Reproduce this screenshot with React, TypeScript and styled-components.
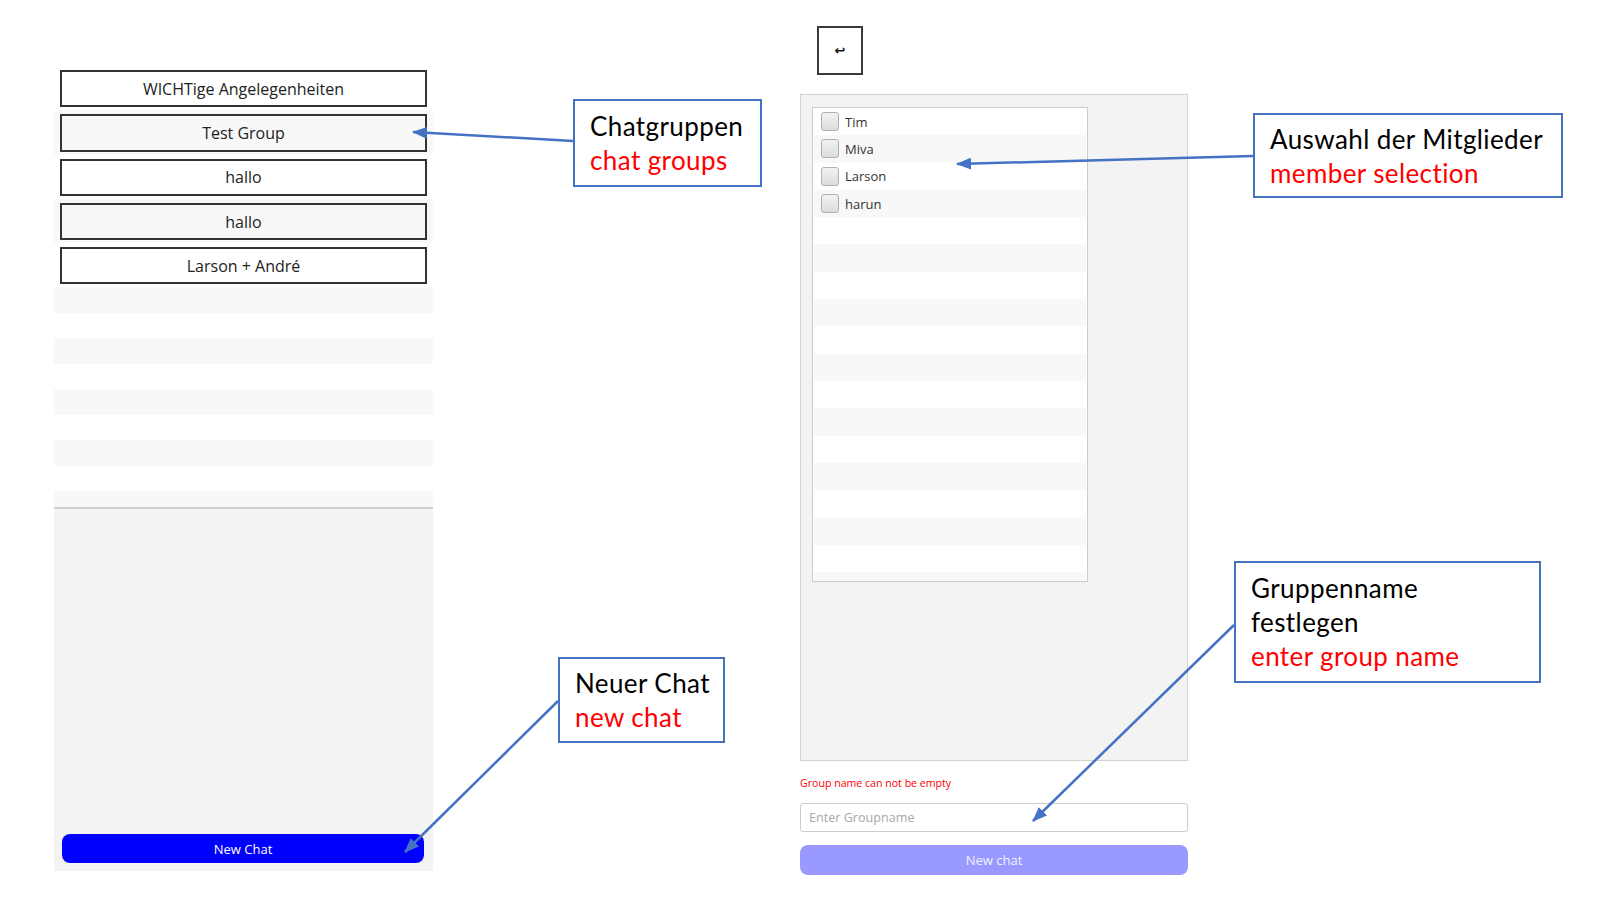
import React from "react";
import styled, { createGlobalStyle } from "styled-components";

const GlobalStyle = createGlobalStyle`
  html, body { margin: 0; padding: 0; background: #ffffff; }
  * { box-sizing: border-box; }
`;

const UI_FONT = `"Open Sans", "Noto Sans", sans-serif`;
const NOTE_FONT = `Lato, "Open Sans", sans-serif`;

const Page = styled.div`
  position: relative;
  width: 1607px;
  height: 904px;
  display: flex;
  align-items: flex-start;
  gap: 367px;
  padding-left: 54px;
  font-family: ${UI_FONT};
  overflow: hidden;
`;

/* ---------- left: chat list ---------- */
const LeftPanel = styled.section`
  width: 379px;
  height: 805px;
  margin-top: 66px;
  display: flex;
  flex-direction: column;
`;

const ChatList = styled.div`
  height: 443px;
  overflow: hidden;
  background: #ffffff;
  border-bottom: 2px solid #cfcfcf;
`;

const GroupRow = styled.div<{ $striped: boolean }>`
  height: 44.3px;
  padding: 4px 6px 3px 6px;
  background: ${(p) => (p.$striped ? "#f8f8f8" : "#ffffff")};
`;

const GroupButton = styled.button`
  width: 100%;
  height: 100%;
  border: 2px solid #333333;
  background: transparent;
  font-family: ${UI_FONT};
  font-size: 16px;
  color: #222222;
  padding: 0;
`;

const EmptyRow = styled.div<{ $striped: boolean }>`
  height: 25.5px;
  background: ${(p) => (p.$striped ? "#f8f8f8" : "#ffffff")};
`;

const ListFooter = styled.div`
  flex: 1;
  background: #f3f3f3;
  display: flex;
  align-items: flex-end;
  padding: 0 9px 8px 8px;
`;

const PrimaryButton = styled.button`
  width: 100%;
  height: 29px;
  border: none;
  border-radius: 8px;
  background: #0000ff;
  color: #ffffff;
  font-family: ${UI_FONT};
  font-size: 13px;
`;

/* ---------- right: new group form ---------- */
const RightColumn = styled.section`
  width: 388px;
  padding-top: 26px;
  display: flex;
  flex-direction: column;
`;

const BackButton = styled.button`
  width: 46px;
  height: 49px;
  margin-left: 17px;
  margin-bottom: 19px;
  border: 2px solid #3a3a3a;
  background: #ffffff;
  font-family: "DejaVu Sans", sans-serif;
  font-size: 13px;
  font-weight: bold;
  color: #111111;
  padding: 0;
`;

const MemberPanel = styled.div`
  height: 667px;
  border: 1px solid #d2d2d2;
  background: #f3f3f3;
  padding: 12px 0 0 11px;
`;

const MemberList = styled.div`
  width: 276px;
  height: 475px;
  border: 1px solid #cccccc;
  background: #ffffff;
  padding: 0 1px;
  overflow: hidden;
`;

const MemberRow = styled.label<{ $striped: boolean }>`
  height: 27.3px;
  display: flex;
  align-items: center;
  padding-left: 7px;
  gap: 6px;
  background: ${(p) => (p.$striped ? "#f8f8f8" : "#ffffff")};
  font-size: 13px;
  color: #333333;
`;

const CheckBox = styled.span`
  width: 18px;
  height: 19px;
  border: 1px solid #b0b0b0;
  border-radius: 3px;
  background: linear-gradient(#f2f2f2, #dcdcdc);
`;

const ErrorText = styled.div`
  margin-top: 15px;
  font-size: 10.6px;
  line-height: 14px;
  color: #ff0000;
`;

const GroupInput = styled.input`
  margin-top: 13px;
  height: 29px;
  width: 100%;
  border: 1px solid #cccccc;
  border-radius: 3px;
  padding: 0 8px;
  font-family: ${UI_FONT};
  font-size: 12.6px;
  color: #333;
  &::placeholder { color: #a8a8a8; }
`;

const SubmitButton = styled.button`
  margin-top: 13px;
  height: 30px;
  width: 100%;
  border: none;
  border-radius: 8px;
  background: #9999ff;
  color: #f2f2ff;
  font-family: ${UI_FONT};
  font-size: 13px;
`;

/* ---------- annotations (overlay) ---------- */
const Callout = styled.div<{ $x: number; $y: number; $w: number; $h: number }>`
  position: absolute;
  left: ${(p) => p.$x}px;
  top: ${(p) => p.$y}px;
  width: ${(p) => p.$w}px;
  height: ${(p) => p.$h}px;
  border: 2px solid #4472c4;
  background: #ffffff;
  padding-left: 15px;
  display: flex;
  flex-direction: column;
  justify-content: center;
  font-family: ${NOTE_FONT};
  font-size: 26px;
  letter-spacing: 0.4px;
  line-height: 34px;
`;

const NoteLine = styled.span<{ $red?: boolean }>`
  color: ${(p) => (p.$red ? "#ff0000" : "#000000")};
  white-space: nowrap;
`;

const ArrowLayer = styled.svg`
  position: absolute;
  left: 0;
  top: 0;
  pointer-events: none;
`;

const groups = [
  "WICHTige Angelegenheiten",
  "Test Group",
  "hallo",
  "hallo",
  "Larson + André",
];
const members = ["Tim", "Miva", "Larson", "harun"];

const arrows = [
  { x1: 573, y1: 141, x2: 413, y2: 132 },
  { x1: 1253, y1: 156, x2: 957, y2: 164 },
  { x1: 558, y1: 701, x2: 405, y2: 852 },
  { x1: 1234, y1: 625, x2: 1033, y2: 821 },
];

export default function App() {
  return (
    <>
      <GlobalStyle />
      <Page>
        <LeftPanel>
          <ChatList>
            {groups.map((g, i) => (
              <GroupRow key={i} $striped={i % 2 === 1}>
                <GroupButton>{g}</GroupButton>
              </GroupRow>
            ))}
            {Array.from({ length: 10 }).map((_, i) => (
              <EmptyRow key={i} $striped={i % 2 === 0} />
            ))}
          </ChatList>
          <ListFooter>
            <PrimaryButton>New Chat</PrimaryButton>
          </ListFooter>
        </LeftPanel>

        <RightColumn>
          <BackButton>↩</BackButton>
          <MemberPanel>
            <MemberList>
              {Array.from({ length: 18 }).map((_, i) => (
                <MemberRow key={i} $striped={i % 2 === 1}>
                  {members[i] && (
                    <>
                      <CheckBox />
                      {members[i]}
                    </>
                  )}
                </MemberRow>
              ))}
            </MemberList>
          </MemberPanel>
          <ErrorText>Group name can not be empty</ErrorText>
          <GroupInput placeholder="Enter Groupname" />
          <SubmitButton>New chat</SubmitButton>
        </RightColumn>

        <Callout $x={573} $y={99} $w={189} $h={88}>
          <NoteLine>Chatgruppen</NoteLine>
          <NoteLine $red>chat groups</NoteLine>
        </Callout>
        <Callout $x={1253} $y={113} $w={310} $h={85}>
          <NoteLine>Auswahl der Mitglieder</NoteLine>
          <NoteLine $red>member selection</NoteLine>
        </Callout>
        <Callout $x={558} $y={657} $w={167} $h={86}>
          <NoteLine>Neuer Chat</NoteLine>
          <NoteLine $red>new chat</NoteLine>
        </Callout>
        <Callout $x={1234} $y={561} $w={307} $h={122}>
          <NoteLine>Gruppenname</NoteLine>
          <NoteLine>festlegen</NoteLine>
          <NoteLine $red>enter group name</NoteLine>
        </Callout>

        <ArrowLayer width={1607} height={904} viewBox="0 0 1607 904">
          <defs>
            <marker
              id="head"
              markerUnits="userSpaceOnUse"
              markerWidth="16"
              markerHeight="12"
              refX="14"
              refY="6"
              orient="auto"
            >
              <path d="M0 0 L15 6 L0 12 Z" fill="#4472c4" />
            </marker>
          </defs>
          {arrows.map((a, i) => (
            <line
              key={i}
              x1={a.x1}
              y1={a.y1}
              x2={a.x2}
              y2={a.y2}
              stroke="#4472c4"
              strokeWidth={2.5}
              markerEnd="url(#head)"
            />
          ))}
        </ArrowLayer>
      </Page>
    </>
  );
}
